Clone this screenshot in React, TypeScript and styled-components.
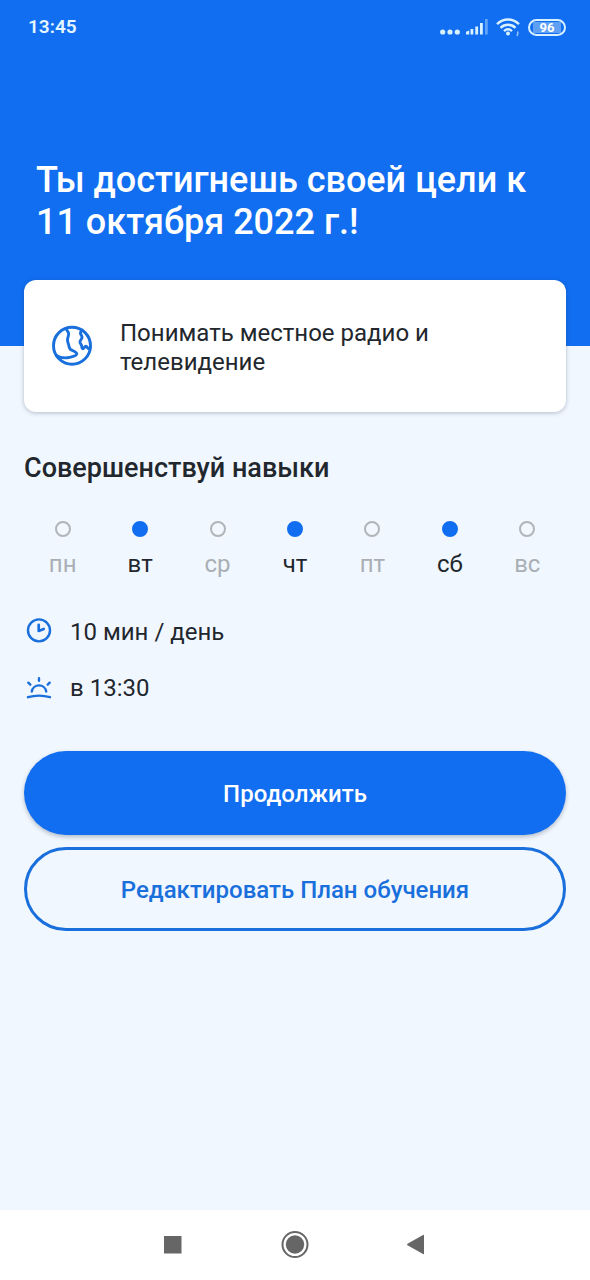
import React from 'react';
import styled, { createGlobalStyle } from 'styled-components';

const blue = '#116ef0';
const outlineBlue = '#196fdc';
const ink = '#22272e';
const mist = '#f1f7fe';

const GlobalStyle = createGlobalStyle`
  *, *::before, *::after { box-sizing: border-box; }
  body {
    margin: 0;
    background: ${mist};
    color: ${ink};
    font-family: Roboto, "Noto Sans", sans-serif;
  }
  h1, h2, p, ul { margin: 0; padding: 0; }
`;

const Screen = styled.div`
  min-height: 100vh;
  display: flex;
  flex-direction: column;
`;

const Hero = styled.header`
  background: ${blue};
  color: #fff;
  padding-bottom: 103px;
`;

const StatusBar = styled.div`
  display: flex;
  align-items: center;
  justify-content: space-between;
  height: 54px;
  padding: 0 24px 0 28px;
`;

const Time = styled.time`
  font-size: 19px;
  line-height: 22px;
  font-weight: 600;
  color: #e4f6ff;
`;

const StatusIcons = styled.div`
  display: flex;
  align-items: center;
  gap: 8px;
  color: #d8f1ff;
  svg { display: block; }
`;

const Battery = styled.span`
  display: flex;
  align-items: center;
  justify-content: center;
  width: 38px;
  height: 17px;
  border: 2px solid #d8f1ff;
  border-radius: 9px;
  background: linear-gradient(#5fa0f5, #5fa0f5) center / 28px 11px no-repeat;
  color: #fff;
  font-size: 13px;
  line-height: 13px;
  font-weight: 700;
`;

const Title = styled.h1`
  padding: 105px 36px 0;
  font-size: 36px;
  line-height: 42px;
  font-weight: 500;
`;

const Main = styled.main`
  flex: 1;
  padding: 0 24px 24px;
`;

const GoalCard = styled.section`
  display: flex;
  align-items: center;
  gap: 28px;
  min-height: 132px;
  margin-top: -66px;
  padding: 24px 28px;
  background: #fff;
  border-radius: 12px;
  box-shadow: 0 1px 4px rgba(30, 50, 80, 0.3);
  font-size: 24px;
  line-height: 29px;
  svg { flex: none; }
  p { padding-top: 4px; }
`;

const SectionTitle = styled.h2`
  margin-top: 40px;
  font-size: 27px;
  line-height: 32px;
  font-weight: 500;
`;

const Days = styled.div`
  display: grid;
  grid-template-columns: repeat(7, 1fr);
  margin-top: 37px;
`;

const Day = styled.label<{ $on: boolean }>`
  display: flex;
  flex-direction: column;
  align-items: center;
  gap: 13px;
  color: ${p => (p.$on ? ink : '#a9afb5')};
  font-size: 24px;
  line-height: 28px;
`;

const DayDot = styled.input`
  appearance: none;
  width: 16px;
  height: 16px;
  margin: 0;
  border: 2px solid #b0b5ba;
  border-radius: 50%;
  &:checked {
    border-color: ${blue};
    background: ${blue};
  }
`;

const Details = styled.ul`
  display: grid;
  gap: 28px;
  margin-top: 40px;
  list-style: none;
`;

const Detail = styled.li`
  display: flex;
  align-items: center;
  gap: 16px;
  font-size: 24px;
  line-height: 28px;
`;

const Actions = styled.div`
  display: grid;
  gap: 12px;
  margin-top: 49px;
`;

const Button = styled.button<{ $outline?: boolean }>`
  width: 100%;
  height: 84px;
  padding: 2px 24px 0;
  border: ${p => (p.$outline ? `3px solid ${outlineBlue}` : '0')};
  border-radius: 42px;
  background: ${p => (p.$outline ? 'transparent' : blue)};
  color: ${p => (p.$outline ? outlineBlue : '#fff')};
  box-shadow: ${p => (p.$outline ? 'none' : '0 2px 4px rgba(30, 50, 80, 0.3)')};
  font-family: inherit;
  font-size: 24px;
  line-height: 28px;
  font-weight: 500;
`;

const NavBar = styled.nav`
  display: flex;
  align-items: center;
  justify-content: center;
  gap: 82px;
  height: 70px;
  background: #fff;
`;

const NavButton = styled.button`
  display: block;
  width: 40px;
  height: 40px;
  padding: 0;
  border: 0;
  background: none;
  color: #666;
  svg { display: block; }
`;

const days = [
  { name: 'пн', on: false },
  { name: 'вт', on: true },
  { name: 'ср', on: false },
  { name: 'чт', on: true },
  { name: 'пт', on: false },
  { name: 'сб', on: true },
  { name: 'вс', on: false },
];

const SignalIcon = () => (
  <svg width="48" height="18" viewBox="0 0 48 18" fill="currentColor" aria-hidden="true">
    <circle cx="2.7" cy="14" r="2.6" />
    <circle cx="10" cy="14" r="2.6" />
    <circle cx="17.3" cy="14" r="2.6" />
    <path d="M26 16.5v-2.8l3.2-1.2v4zM30.5 11h2.8v5.5h-2.8zM35.300 8.500h2.800v8h-2.800zM40 5h2.800v11.500h-2.800z" />
    <path d="M45 1h2.800v15.500h-2.800z" opacity=".4" />
  </svg>
);

const WifiIcon = () => (
  <svg width="24" height="20" viewBox="0 0 24 20" fill="none" stroke="currentColor" strokeWidth="2.400" aria-hidden="true">
    <path d="M1 7.100C7.500 1 16.500 1 23 7.100M4.500 10.800c4.300-4 10.700-4 15 0M8 14.200c2.400-2.200 5.600-2.200 8 0" />
    <circle cx="12" cy="16.500" r="2" fill="currentColor" stroke="none" />
    <path d="M21.800 14.500v1.500q0 2-1 3" strokeWidth="1.400" opacity=".7" />
  </svg>
);

const GlobeIcon = () => (
  <svg width="40" height="42" viewBox="0 0 40 42" fill="none" stroke={outlineBlue} strokeWidth="2.900" strokeLinecap="round" strokeLinejoin="round" aria-hidden="true">
    <circle cx="20" cy="20.700" r="18.500" />
    <path d="M14 3.400c.2 1.700 2.300 2.700 2.600 4.900.3 2.400-1.100 4.200-1.100 6.700 0 2.300.9 3.200 1.300 5.200.3 1.400-.1 2.400 1.400 3.900 2.100 2 6.600 2.500 6.600 4.700 0 2.100-3.700 2.900-7.100 3.600-4.100.8-9.800.3-13.200-2" />
    <path d="M30 5.100c-.6 1.300-1.600 1.700-1.500 3.200.1 1.500 1.400 2.100 1.500 3.900.1 2-2 2.600-2 4.700 0 1.700 1.200 2.300 1.600 3.700.3 1.200-.1 2.700 1 3.100 1.300.5 2.100-2.400 3.300-2.600 1.200-.1 1.300 2.100 2.400 2.400.9.200 1.500-.5 2-1.100" />
  </svg>
);

const ClockIcon = () => (
  <svg width="30" height="28" viewBox="0 0 30 28" fill="none" stroke={outlineBlue} strokeWidth="2.400" strokeLinecap="round" strokeLinejoin="round" aria-hidden="true">
    <circle cx="15" cy="12.400" r="11" />
    <path d="M14.700 6.800v6.200l5-2" strokeWidth="2.700" />
  </svg>
);

const SunIcon = () => (
  <svg width="30" height="28" viewBox="0 0 30 28" fill="none" stroke={outlineBlue} strokeWidth="2.400" strokeLinecap="round" aria-hidden="true">
    <path d="M4 23.200c7.300-2.100 14.700-2.100 22 0" />
    <path d="M7.800 17.500a7.300 7.300 0 0 1 14.400 0" />
    <path d="M15 4.300v2.500M4.300 8.700l2 2M25.700 8.700l-2 2" strokeWidth="2.400" />
  </svg>
);

export default function App() {
  return (
    <Screen>
      <GlobalStyle />
      <Hero>
        <StatusBar>
          <Time>13:45</Time>
          <StatusIcons>
            <SignalIcon />
            <WifiIcon />
            <Battery>96</Battery>
          </StatusIcons>
        </StatusBar>
        <Title>Ты достигнешь своей цели к 11 октября 2022 г.!</Title>
      </Hero>
      <Main>
        <GoalCard>
          <GlobeIcon />
          <p>Понимать местное радио и телевидение</p>
        </GoalCard>
        <SectionTitle>Совершенствуй навыки</SectionTitle>
        <Days>
          {days.map(d => (
            <Day key={d.name} $on={d.on}>
              <DayDot type="checkbox" checked={d.on} readOnly />
              {d.name}
            </Day>
          ))}
        </Days>
        <Details>
          <Detail><ClockIcon />10 мин / день</Detail>
          <Detail><SunIcon />в 13:30</Detail>
        </Details>
        <Actions>
          <Button type="button">Продолжить</Button>
          <Button type="button" $outline>Редактировать План обучения</Button>
        </Actions>
      </Main>
      <NavBar>
        <NavButton type="button" aria-label="Недавние">
          <svg width="40" height="40" viewBox="0 0 40 40" fill="currentColor"><path d="M11 11h17.500v17.500H11z" /></svg>
        </NavButton>
        <NavButton type="button" aria-label="Домой">
          <svg width="40" height="40" viewBox="0 0 40 40" fill="currentColor">
            <circle cx="20" cy="19.500" r="9.200" />
            <circle cx="20" cy="19.500" r="12.500" fill="none" stroke="currentColor" strokeWidth="2" />
          </svg>
        </NavButton>
        <NavButton type="button" aria-label="Назад">
          <svg width="40" height="40" viewBox="0 0 40 40" fill="currentColor"><path d="M27 10.500v18q0 1-1 .5L10.500 20.200q-1-.7 0-1.400L26 10q1-.5 1 .5z" /></svg>
        </NavButton>
      </NavBar>
    </Screen>
  );
}
